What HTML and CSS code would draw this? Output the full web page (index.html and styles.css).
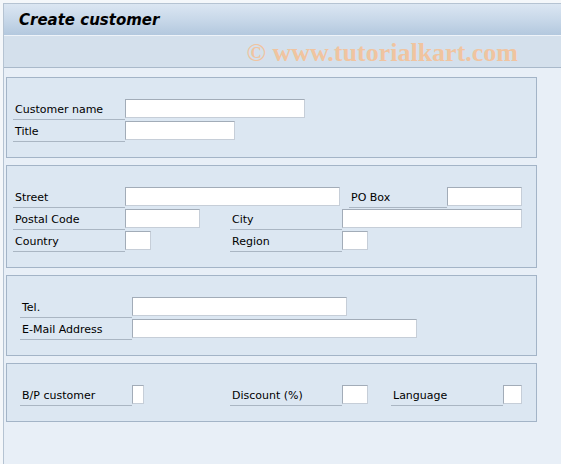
FILE: index.html
```html
<!DOCTYPE html>
<html>
<head>
<meta charset="utf-8">
<link rel="stylesheet" href="styles.css">
</head>
<body>
<div class="window">
  <div class="titlebar"><span class="title">Create customer</span></div>
  <div class="toolbar"><span class="watermark">© www.tutorialkart.com</span></div>
  <div class="content">
    <div class="group g1">
      <div class="row"><span class="lbl">Customer name</span><span class="inp w180"></span></div>
      <div class="row"><span class="lbl">Title</span><span class="inp w110"></span></div>
    </div>
    <div class="group g1">
      <div class="row"><span class="lbl">Street</span><span class="inp w215"></span><span class="sp9"></span><span class="lbl w98">PO Box</span><span class="inp w75"></span></div>
      <div class="row"><span class="lbl">Postal Code</span><span class="inp w75"></span><span class="sp30"></span><span class="lbl">City</span><span class="inp w180"></span></div>
      <div class="row"><span class="lbl">Country</span><span class="inp w26"></span><span class="sp79"></span><span class="lbl">Region</span><span class="inp w26"></span></div>
    </div>
    <div class="group g2">
      <div class="row"><span class="lbl">Tel.</span><span class="inp w215"></span></div>
      <div class="row"><span class="lbl">E-Mail Address</span><span class="inp w285"></span></div>
    </div>
    <div class="group g2">
      <div class="row"><span class="lbl">B/P customer</span><span class="inp w12"></span><span class="sp86"></span><span class="lbl">Discount (%)</span><span class="inp w26"></span><span class="sp23"></span><span class="lbl">Language</span><span class="inp w19"></span></div>
    </div>
  </div>
</div>
</body>
</html>
```
FILE: styles.css
```css
html, body {
  margin: 0;
  padding: 0;
  background: #f4f7fa;
}
body {
  width: 561px;
  height: 464px;
  overflow: hidden;
  font-family: "DejaVu Sans", Tahoma, sans-serif;
}
.window {
  margin: 3px 0 0 3px;
  height: 461px;
  border-left: 1px solid #b5c3d2;
  border-top: 1px solid #b5c3d2;
  background: #e8eff7;
  box-sizing: border-box;
}
.titlebar {
  height: 31px;
  background: linear-gradient(#dbe6f2, #c8d8e9 50%, #b3c8de);
  border-bottom: 1px solid #eef3f9;
  display: flex;
  align-items: center;
  padding-left: 15px;
}
.title {
  font-weight: bold;
  font-style: italic;
  font-size: 15px;
  color: #000;
}
.toolbar {
  height: 31px;
  background: #d4e0ec;
  border-bottom: 1px solid #a9b9ca;
  display: flex;
  align-items: center;
  justify-content: flex-end;
  padding-right: 43px;
}
.watermark {
  font-family: "Liberation Serif", "Times New Roman", serif;
  font-weight: bold;
  font-size: 26px;
  color: #f0c4a0;
  padding-top: 2px;
}
.content {
  padding: 9px 0 0 2px;
  display: flex;
  flex-direction: column;
  gap: 7px;
}
.group {
  width: 531px;
  box-sizing: border-box;
  border: 1px solid #a3b4c7;
  background: #dce7f2;
  padding-top: 21px;
  padding-bottom: 14px;
  display: flex;
  flex-direction: column;
}
.g1 .row { padding-left: 6px; }
.g2 .row { padding-left: 13px; }
.row {
  display: flex;
  height: 22px;
  align-items: flex-start;
}
.lbl {
  width: 112px;
  height: 21px;
  box-sizing: border-box;
  border-bottom: 1px solid #aab6c3;
  font-size: 11px;
  color: #000;
  padding-left: 2px;
  line-height: 21px;
  flex: none;
}
.inp {
  height: 19px;
  box-sizing: border-box;
  background: #fff;
  border: 1px solid #a2acb8;
  border-right-color: #c6ced8;
  border-bottom-color: #c6ced8;
  flex: none;
}
.w98 { width: 98px; }
.w12 { width: 12px; }
.w19 { width: 19px; }
.w26 { width: 26px; }
.w75 { width: 75px; }
.w110 { width: 110px; }
.w180 { width: 180px; }
.w215 { width: 215px; }
.w285 { width: 285px; }
.sp9 { width: 9px; flex: none; }
.sp23 { width: 23px; flex: none; }
.sp30 { width: 30px; flex: none; }
.sp79 { width: 79px; flex: none; }
.sp86 { width: 86px; flex: none; }
```
